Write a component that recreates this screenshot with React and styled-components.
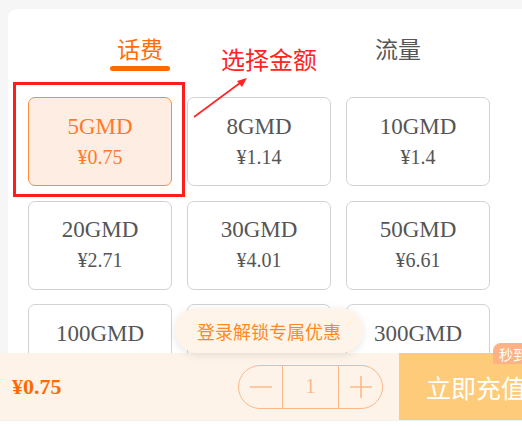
import React from "react";
import styled, { createGlobalStyle } from "styled-components";

const GlobalStyle = createGlobalStyle`
  html, body { margin: 0; padding: 0; background: #f6f6f6; overflow: hidden; }
  body { font-family: "Liberation Serif", "Noto Sans CJK SC", serif; }
  * { box-sizing: border-box; }
`;

const Page = styled.div`
  position: relative;
  width: 522px;
  height: 427px;
  overflow: hidden;
  display: flex;
  flex-direction: column;
  background: #f6f6f6;
`;

const Card = styled.div`
  position: relative;
  margin: 9px 0 0 8px;
  width: 530px;
  height: 344px;
  flex-shrink: 0;
  background: #fff;
  border-radius: 9px 0 0 0;
  overflow: hidden;
`;

const Tabs = styled.div`
  display: grid;
  grid-template-columns: 258px 258px;
  padding: 24px 0 0 3px;
`;

const Tab = styled.div`
  display: flex;
  flex-direction: column;
  align-items: center;
  font-family: "Noto Sans CJK SC", sans-serif;
  font-size: 23px;
  line-height: 30px;
  color: ${(p) => (p.$active ? "#ff6d0a" : "#555")};
`;

const Underline = styled.div`
  margin-top: 3px;
  width: 60px;
  height: 5px;
  border-radius: 3px;
  background: ${(p) => (p.$active ? "#ff6a00" : "transparent")};
`;

const Grid = styled.div`
  display: grid;
  grid-template-columns: repeat(3, 144px);
  grid-auto-rows: 89px;
  column-gap: 15px;
  row-gap: 14.5px;
  padding: 26px 20px 0;
`;

const Option = styled.div`
  display: flex;
  flex-direction: column;
  align-items: center;
  justify-content: center;
  border: 1px solid ${(p) => (p.$selected ? "#ff8a3d" : "#d2d2d2")};
  border-radius: 7px;
  background: ${(p) => (p.$selected ? "#feede3" : "#fff")};
  color: ${(p) => (p.$selected ? "#ff7a2b" : "#555")};
`;

const Amount = styled.div`
  font-size: 23px;
  line-height: 30px;
`;

const Price = styled.div`
  min-height: 30px;
  font-size: 20px;
  line-height: 30px;
`;

const HighlightBox = styled.div`
  position: absolute;
  left: 5px;
  top: 73px;
  width: 172px;
  height: 115px;
  border: 3px solid #ff1c1c;
`;

const Note = styled.div`
  position: absolute;
  left: 213px;
  top: 35px;
  font-family: "Noto Sans CJK SC", sans-serif;
  font-size: 24px;
  line-height: 30px;
  color: #ff2424;
  white-space: nowrap;
`;

const Arrow = styled.svg`
  position: absolute;
  left: 180px;
  top: 60px;
`;

const Bar = styled.div`
  display: flex;
  align-items: center;
  height: 67px;
  flex-shrink: 0;
  background: #fef3e8;
`;

const Total = styled.div`
  flex: 1;
  padding-left: 12px;
  font-size: 22px;
  font-weight: bold;
  color: #ff6a00;
`;

const Stepper = styled.div`
  display: grid;
  grid-template-columns: 43px 1fr 43px;
  width: 145px;
  height: 44px;
  margin-right: 16px;
  border: 1.5px solid #fdb88a;
  border-radius: 22px;
  overflow: hidden;
`;

const StepBtn = styled.div`
  display: flex;
  align-items: center;
  justify-content: center;
`;

const Count = styled.div`
  display: flex;
  align-items: center;
  justify-content: center;
  border-left: 1.5px solid #fdb88a;
  border-right: 1.5px solid #fdb88a;
  font-size: 20px;
  color: #fdb88a;
`;

const ChargeButton = styled.div`
  width: 123px;
  height: 100%;
  flex-shrink: 0;
  display: flex;
  align-items: center;
  padding-left: 27px;
  background: #fecb7b;
  color: #fff;
  font-family: "Noto Sans CJK SC", sans-serif;
  font-size: 25px;
  white-space: nowrap;
`;

const Badge = styled.div`
  position: absolute;
  left: 493px;
  top: 343px;
  height: 21px;
  padding: 0 6px;
  display: flex;
  align-items: center;
  background: #fcb284;
  border-radius: 8px 0 0 2px;
  color: #fff;
  font-family: "Noto Sans CJK SC", sans-serif;
  font-size: 14px;
  white-space: nowrap;
`;

const LoginTip = styled.div`
  position: absolute;
  left: 175px;
  top: 308px;
  width: 188px;
  height: 45px;
  display: flex;
  align-items: center;
  justify-content: center;
  border-radius: 23px;
  background: #fef4e9;
  box-shadow: 0 2px 8px rgba(0, 0, 0, 0.1);
  color: #ff8a24;
  font-family: "Noto Sans CJK SC", sans-serif;
  font-size: 18px;
`;

const Footer = styled.div`
  flex: 1;
  background: #fff;
  border-top: 1px solid #f0f0f0;
`;

const options = [
  ["5GMD", "¥0.75"],
  ["8GMD", "¥1.14"],
  ["10GMD", "¥1.4"],
  ["20GMD", "¥2.71"],
  ["30GMD", "¥4.01"],
  ["50GMD", "¥6.61"],
  ["100GMD", ""],
  ["200GMD", ""],
  ["300GMD", ""],
];

export default function App() {
  return (
    <>
      <GlobalStyle />
      <Page>
        <Card>
          <Tabs>
            <Tab $active>
              话费
              <Underline $active />
            </Tab>
            <Tab>
              流量
              <Underline />
            </Tab>
          </Tabs>
          <Grid>
            {options.map(([a, p], i) => (
              <Option key={a} $selected={i === 0}>
                <Amount>{a}</Amount>
                <Price>{p}</Price>
              </Option>
            ))}
          </Grid>
          <HighlightBox />
          <Note>选择金额</Note>
          <Arrow width="70" height="60" viewBox="0 0 70 60">
            <line x1="6" y1="48" x2="56" y2="11" stroke="#ff2424" strokeWidth="1.6" />
            <polygon points="59,9 49,12 54,18" fill="#ff2424" />
          </Arrow>
        </Card>
        <Bar>
          <Total>¥0.75</Total>
          <Stepper>
            <StepBtn>
              <svg width="24" height="24" viewBox="0 0 24 24">
                <line x1="1" y1="12" x2="23" y2="12" stroke="#fdb88a" strokeWidth="1.6" />
              </svg>
            </StepBtn>
            <Count>1</Count>
            <StepBtn>
              <svg width="24" height="24" viewBox="0 0 24 24">
                <line x1="1" y1="12" x2="23" y2="12" stroke="#fdb88a" strokeWidth="1.6" />
                <line x1="12" y1="1" x2="12" y2="23" stroke="#fdb88a" strokeWidth="1.6" />
              </svg>
            </StepBtn>
          </Stepper>
          <ChargeButton>立即充值</ChargeButton>
        </Bar>
        <Footer />
        <LoginTip>登录解锁专属优惠</LoginTip>
        <Badge>秒到账</Badge>
      </Page>
    </>
  );
}
